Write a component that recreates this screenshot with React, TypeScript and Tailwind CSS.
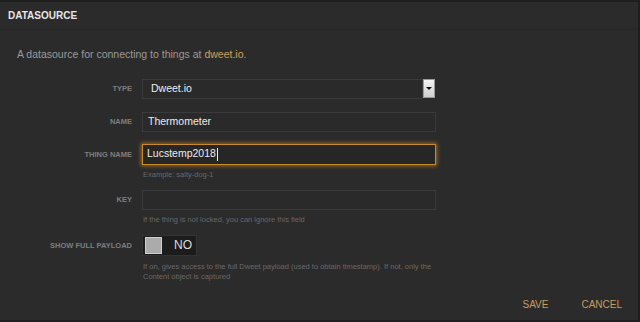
import React from "react";

export default function App() {
  const label = "w-[142px] shrink-0 pr-[10px] text-right text-[7.5px] font-bold uppercase text-[#7e7e7e]";
  const hint = "text-[7.5px] leading-[10px] text-[#686868]";
  return (
    <div
      className="w-[640px] h-[322px] bg-[#2b2b2b] border-t-[2px] border-b-[2px] border-r-[2px] border-[#1e1e1e] flex flex-col overflow-hidden"
      style={{ fontFamily: '"Liberation Sans", Arial, sans-serif' }}
    >
      <div className="h-[28px] px-[8px] flex items-center border-b border-[#272727]">
        <span className="text-[10px] font-bold text-[#e6e6e6]">DATASOURCE</span>
      </div>
      <div className="pl-[17px] pt-[17px] text-[10.5px] text-[#9a9a9a]">
        A datasource for connecting to things at <span className="text-[#d1a058]">dweet.io</span>.
      </div>
      <div className="flex flex-col pt-[16px]">
        <div className="flex items-center h-[20px]">
          <div className={label}>Type</div>
          <div className="flex items-center">
            <div className="w-[281px] h-[20px] border border-[#3a3a3a] bg-[#2a2a2a] flex items-center px-[8px] text-[10.5px] text-[#ececec]">
              Dweet.io
            </div>
            <div className="w-[12px] h-[19px] bg-gradient-to-b from-[#f4f4f4] to-[#cfcfcf] border border-[#9a9a9a] flex items-center justify-center">
              <div className="w-0 h-0 border-l-[3px] border-r-[3px] border-t-[3px] border-l-transparent border-r-transparent border-t-[#111]" />
            </div>
          </div>
        </div>
        <div className="flex items-center h-[20px] mt-[13px]">
          <div className={label}>Name</div>
          <div className="w-[294px] h-[20px] border border-[#3a3a3a] bg-[#2a2a2a] flex items-center px-[5px] text-[10.5px] text-[#ececec]">
            Thermometer
          </div>
        </div>
        <div className="flex items-center h-[21px] mt-[12px]">
          <div className={label}>Thing name</div>
          <div className="w-[294px] h-[21px] border border-[#c88a2a] bg-[#262626] shadow-[0_0_4px_1px_rgba(230,150,40,0.6)] flex items-center px-[4px] text-[10.5px] text-[#ececec]">
            Lucstemp2018<span className="w-[1px] h-[13px] bg-[#eee] ml-[1px]" />
          </div>
        </div>
        <div className="pl-[143px] pt-[5px] h-[20px]">
          <div className={hint}>Example: salty-dog-1</div>
        </div>
        <div className="flex items-center h-[20px] mt-[5px]">
          <div className={label}>Key</div>
          <div className="w-[294px] h-[20px] border border-[#3a3a3a] bg-[#2a2a2a]" />
        </div>
        <div className="pl-[143px] pt-[5px] h-[20px]">
          <div className={hint}>If the thing is not locked, you can ignore this field</div>
        </div>
        <div className="flex items-center h-[21px] mt-[5px]">
          <div className={label}>Show full payload</div>
          <div className="w-[55px] h-[21px] bg-[#1c1c1c] border border-[#333] flex items-center pl-[2px]">
            <div className="w-[17px] h-[17px] bg-[#ababab] border border-[#cfcfcf]" />
            <span className="ml-[12px] text-[12px] text-[#dcdcdc]">NO</span>
          </div>
        </div>
        <div className="pl-[143px] pt-[6px] pr-[8px]">
          <div className={hint + " w-[300px]"}>
            If on, gives access to the full Dweet payload (used to obtain timestamp). If not, only the Content object is captured
          </div>
        </div>
      </div>
      <div className="flex-1" />
      <div className="flex justify-end items-center h-[28px] pb-[4px] text-[10px] text-[#c99c5e]">
        <span className="mr-[33px]">SAVE</span>
        <span className="mr-[16px]">CANCEL</span>
      </div>
    </div>
  );
}
